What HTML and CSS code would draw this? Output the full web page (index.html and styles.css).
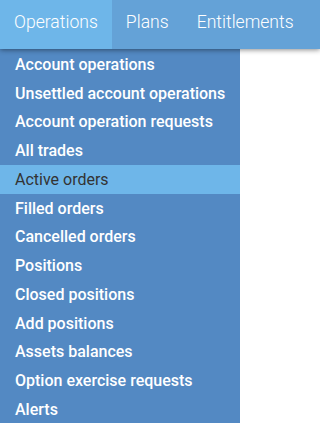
FILE: index.html
```html
<!DOCTYPE html>
<html>
<head>
<meta charset="utf-8">
<link rel="stylesheet" href="styles.css">
</head>
<body>
<nav class="topnav">
  <a class="tab tab-active">Operations</a>
  <a class="tab">Plans</a>
  <a class="tab">Entitlements</a>
</nav>
<ul class="menu">
  <li class="item">Account operations</li>
  <li class="item">Unsettled account operations</li>
  <li class="item">Account operation requests</li>
  <li class="item">All trades</li>
  <li class="item item-active">Active orders</li>
  <li class="item">Filled orders</li>
  <li class="item">Cancelled orders</li>
  <li class="item">Positions</li>
  <li class="item">Closed positions</li>
  <li class="item">Add positions</li>
  <li class="item">Assets balances</li>
  <li class="item">Option exercise requests</li>
  <li class="item">Alerts</li>
</ul>
</body>
</html>
```
FILE: styles.css
```css
html, body {
  margin: 0;
  padding: 0;
  background: #ffffff;
  font-family: Roboto, "Liberation Sans", sans-serif;
  overflow: hidden;
}
.topnav {
  position: relative;
  z-index: 2;
  display: flex;
  height: 49px;
  background: #64a2d7;
  box-shadow: 0 1px 5px rgba(0, 0, 0, 0.45);
  white-space: nowrap;
  overflow: hidden;
}
.tab {
  display: block;
  padding: 11px 14px 0 14px;
  font-size: 17.6px;
  font-weight: 300;
  color: #ffffff;
  line-height: 22px;
}
.tab-active {
  background: #6eb6e9;
}
.menu {
  position: relative;
  z-index: 1;
  list-style: none;
  margin: 0;
  padding: 1px 0 0 0;
  width: 240px;
  height: 374px;
  box-sizing: border-box;
  background: #5389c3;
}
.item {
  height: 28.75px;
  display: flex;
  align-items: center;
  padding-left: 15px;
  font-size: 16px;
  font-weight: 500;
  color: #ffffff;
  white-space: nowrap;
}
.item-active {
  background: #6eb6e9;
  color: #333333;
  font-weight: 400;
}
```
